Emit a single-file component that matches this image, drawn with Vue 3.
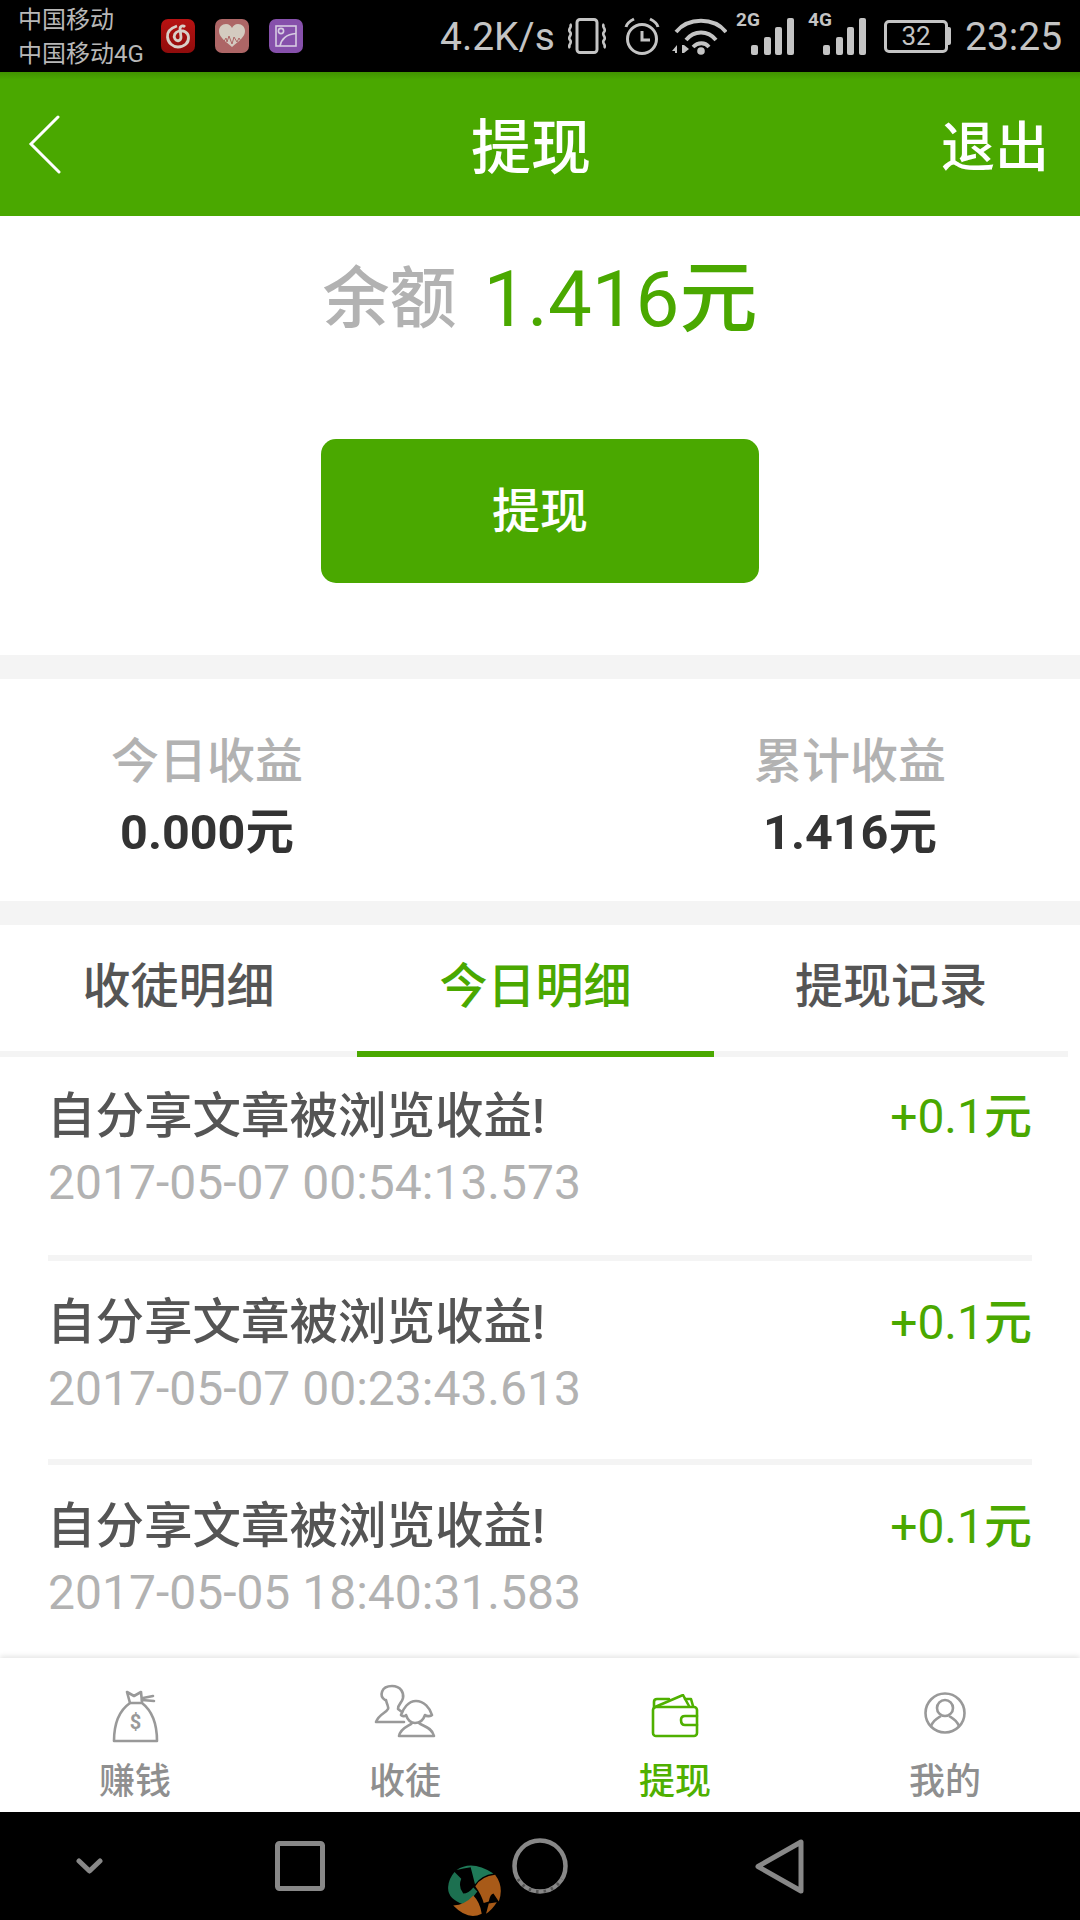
<script setup>
const rows = [
  { time: '2017-05-07 00:54:13.573' },
  { time: '2017-05-07 00:23:43.613' },
  { time: '2017-05-05 18:40:31.583' },
]
</script>

<template>
  <div class="page">
    <div class="status">
      <div class="carriers"><div>中国移动</div><div>中国移动4G</div></div>
      <div class="apps">
        <span class="app red">
          <svg width="26" height="26" viewBox="0 0 26 26" fill="none" stroke="#d8cfc8" stroke-width="2.8">
            <path d="M12 3 C6 5 2 9 2.5 14 C3 20 8 24 13 24 C19 24 24 20 23.5 14 C23 9 18 7 14 8 C10 9 8 13 10 16 C12 19 16 18 16 14 L15 6 C15 3 18 2 20 4"/>
          </svg>
        </span>
        <span class="app rose">
          <svg width="26" height="24" viewBox="0 0 26 24">
            <path d="M13 23 C6 17 0 13 0 7 C0 3 3 0 7 0 C10 0 12 2 13 4 C14 2 16 0 19 0 C23 0 26 3 26 7 C26 13 20 17 13 23 Z" fill="#d4cbc0"/>
            <path d="M4 19 L7 14 L8 18 L10 12 L13 20 L15 13 L18 18 L20 14 L23 19" fill="none" stroke="#ad6666" stroke-width="1"/>
          </svg>
        </span>
        <span class="app purple">
          <svg width="24" height="24" viewBox="0 0 24 24" fill="none" stroke="#d6cbe2" stroke-width="1.6">
            <rect x="2" y="2" width="20" height="20"/>
            <circle cx="7" cy="7" r="2.6"/>
            <path d="M6 22 C7 16 12 10 22 9.5"/>
          </svg>
        </span>
      </div>
      <div class="speed">4.2K/s</div>
      <svg class="si vib" width="40" height="36" viewBox="0 0 40 36" fill="none" stroke="#c4c4c4" stroke-width="3">
        <rect x="10" y="1.5" width="20" height="33" rx="3"/>
        <path d="M3 6 C6 9 0 11 3 14 C6 17 0 19 3 22 C6 25 0 27 3 30 M37 6 C34 9 40 11 37 14 C34 17 40 19 37 22 C34 25 40 27 37 30" stroke-width="2.6"/>
      </svg>
      <svg class="si alarm" width="36" height="38" viewBox="0 0 36 38" fill="none" stroke="#c4c4c4" stroke-width="3">
        <circle cx="18" cy="22" r="14.5"/>
        <path d="M18 14 V23 H26"/>
        <path d="M2 10 C3 6 6 4 10 2 M34 10 C33 6 30 4 26 2"/>
      </svg>
      <svg class="si wifi" width="55" height="38" viewBox="0 0 55 38" fill="none" stroke="#c4c4c4" stroke-width="3.8">
        <path d="M4 15 C16 0 42 0 54 15"/>
        <path d="M14 23 C22 13 36 13 44 23"/>
        <path d="M21 30 C26 25 33 25 37 30"/>
        <circle cx="29" cy="34" r="3.8" fill="#c4c4c4" stroke="none"/>
        <path d="M0 34 L5 28 V36 H3 V34 Z M10 28 H12 L17 32 L12 36 H10 Z" fill="#c4c4c4" stroke="none"/>
      </svg>
      <div class="sig g2"><span class="gl">2G</span><i class="b1"></i><i class="b2"></i><i class="b3"></i><i class="b4"></i></div>
      <div class="sig g4"><span class="gl">4G</span><i class="b1"></i><i class="b2"></i><i class="b3"></i><i class="b4"></i></div>
      <div class="battery"><div class="bbody">32</div><div class="bcap"></div></div>
      <div class="clock">23:25</div>
    </div>

    <div class="header">
      <svg class="back" width="33" height="59" viewBox="0 0 33 59" fill="none" stroke="#fff" stroke-width="3" stroke-linecap="round">
        <path d="M30 2 L3 29 L31 57"/>
      </svg>
      <div class="title">提现</div>
      <div class="logout">退出</div>
    </div>

    <div class="balance">
      <div class="amount-line">
        <span class="bal-label">余额</span>
        <span class="bal-value">1.416<span class="yuan">元</span></span>
      </div>
      <div class="cash-btn"><span class="cash-text">提现</span></div>
    </div>

    <div class="stats">
      <div class="stat">
        <div class="stat-label">今日收益</div>
        <div class="stat-value">0.000元</div>
      </div>
      <div class="stat">
        <div class="stat-label">累计收益</div>
        <div class="stat-value">1.416元</div>
      </div>
    </div>

    <div class="tabs">
      <div class="tab">收徒明细</div>
      <div class="tab on">今日明细</div>
      <div class="tab last">提现记录</div>
    </div>

    <div class="list">
      <div v-for="r in rows" :key="r.time" class="row">
        <div class="row-main">
          <div class="row-title">自分享文章被浏览收益!</div>
          <div class="row-time">{{ r.time }}</div>
        </div>
        <div class="row-amt">+0.1<span class="cjk">元</span></div>
      </div>
    </div>

    <div class="tabbar">
      <div class="nav-item">
        <div class="ic">
          <svg class="i-bag" width="47" height="53" viewBox="0 0 47 53" fill="none" stroke="#999" stroke-width="2.6" stroke-linejoin="round" stroke-linecap="round">
            <path d="M2 51 C2 33 8 20 18 13 L30 13 C39 20 45 33 45 51 Z"/>
            <path d="M18 13 L15 2 L22 6 L29 2 L30 12"/>
            <path d="M30 10 L42 11 M31 8 L41 6"/>
            <text x="23.5" y="39" text-anchor="middle" class="dollar" stroke="none" fill="#999">$</text>
          </svg>
        </div>
        <div class="nav-label">赚钱</div>
      </div>
      <div class="nav-item">
        <div class="ic">
          <svg class="i-ppl" width="62" height="54" viewBox="0 0 62 54" fill="none" stroke="#999" stroke-width="2.6" stroke-linejoin="round" stroke-linecap="round">
            <path d="M11 16 C5 12 7 2 18 2 C27 2 30 9 29 14 C28 19 24 20 24 25 L28 28 M12 16 C13 21 15 23 14 25 C12 29 5 30 2 38 H30"/>
            <path d="M42 17 C34 17 29 25 27 31 C28 32 31 33 32 31 C34 37 38 39 41 39 C45 39 49 37 51 31 C53 33 57 32 58 31 C56 24 50 17 42 17 Z"/>
            <path d="M38 39 C36 42 27 43 25 52 H60 C58 43 48 42 45 39" />
          </svg>
        </div>
        <div class="nav-label">收徒</div>
      </div>
      <div class="nav-item on">
        <div class="ic">
          <svg class="i-wal" width="48" height="44" viewBox="0 0 48 44" fill="none" stroke="#4fb000" stroke-width="2.6" stroke-linejoin="round" stroke-linecap="round">
            <rect x="2" y="13" width="44" height="29" rx="3"/>
            <path d="M3 14 V8 Q3 5 6 5 H18"/>
            <path d="M4 13 L32 1 L38 12"/>
            <path d="M34 5 H40 L42 12"/>
            <path d="M46 22 H34 Q30 22 30 26 Q30 31 34 31 H46"/>
          </svg>
        </div>
        <div class="nav-label">提现</div>
      </div>
      <div class="nav-item">
        <div class="ic">
          <svg class="i-me" width="42" height="42" viewBox="0 0 42 42" fill="none" stroke="#999" stroke-width="2.6">
            <circle cx="21" cy="21" r="19.5"/>
            <circle cx="21" cy="16" r="8"/>
            <path d="M7 34 C10 27 14 26 17 24 M35 34 C32 27 28 26 25 24"/>
          </svg>
        </div>
        <div class="nav-label">我的</div>
      </div>
    </div>

    <div class="sysnav">
      <svg class="n-chev" width="27" height="16" viewBox="0 0 27 16" fill="none" stroke="#888" stroke-width="5" stroke-linecap="round" stroke-linejoin="round">
        <path d="M3 3 L13.5 13 L24 3"/>
      </svg>
      <svg class="n-sq" width="50" height="50" viewBox="0 0 50 50" fill="none" stroke="#888" stroke-width="5">
        <rect x="2.5" y="2.5" width="45" height="45" rx="2"/>
      </svg>
      <svg class="n-circle" width="56" height="56" viewBox="0 0 56 56" fill="none" stroke="#888" stroke-width="4.5">
        <circle cx="28" cy="28" r="25.5"/>
        <path d="M6 41 A25.5 25.5 0 0 0 50 41" stroke="#555" stroke-dasharray="2.5 5" stroke-width="3"/>
      </svg>
      <svg class="n-tri" width="49" height="55" viewBox="0 0 49 55" fill="none" stroke="#888" stroke-width="5" stroke-linejoin="round">
        <path d="M3 27.5 L46 3 V52 Z"/>
      </svg>
      <svg class="logo" width="53" height="53" viewBox="25 102 157 158">
        <path d="M50 120 Q95 88 160 130 Q125 135 105 162 Q98 135 92 112 Q70 116 50 120 Z" fill="#1f7a58"/>
        <path d="M44 126 L64 146 Q54 170 70 190 Q86 190 100 172 L112 184 Q90 215 70 222 Q22 205 25 170 Q27 145 44 126 Z" fill="#1c7050"/>
        <path d="M106 168 Q125 138 165 134 Q192 170 176 214 L160 190 Q150 192 146 214 L131 218 Q125 195 106 168 Z" fill="#a85a18"/>
        <path d="M40 226 Q75 224 100 196 Q120 216 125 250 Q85 272 40 226 Z" fill="#b0601c"/>
        <path d="M146 220 L170 216 Q155 240 138 250 Z" fill="#a85a18"/>
      </svg>
    </div>
  </div>
</template>

<style scoped>
.page {
  width: 1080px;
  height: 1920px;
  display: flex;
  flex-direction: column;
  background: #fff;
  overflow: hidden;
  font-family: Roboto, "Noto Sans CJK SC", sans-serif;
  color: #555;
}
.status {
  height: 72px;
  background: #000;
  display: flex;
  align-items: center;
  position: relative;
  color: #c4c4c4;
  flex: none;
}
.carriers {
  width: 143px;
  padding-left: 18px;
  font-size: 24px;
  line-height: 34px;
  color: #b8b8b8;
  margin-top: 1px;
}
.apps {
  display: flex;
  gap: 20px;
  width: 281px;
}
.app {
  width: 34px;
  height: 34px;
  border-radius: 7px;
  display: flex;
  align-items: center;
  justify-content: center;
}
.red { background: linear-gradient(#b71212, #8f0c0c); }
.rose { background: #ad6666; }
.purple { background: #8650ab; }
.speed {
  font-size: 39px;
  width: 127px;
  margin-left: -2px;
  margin-top: 2px;
  white-space: nowrap;
}
.si { flex: none; }
.vib { margin-right: 17px; margin-top: 0; }
.alarm { margin-right: 12px; }
.wifi { margin-right: 9px; }
.sig {
  position: relative;
  width: 58px;
  height: 43px;
  margin-right: 14px;
  flex: none;
  margin-top: -6px;
}
.g4 { margin-right: 18px; }
.gl {
  position: absolute;
  left: 0;
  top: -2px;
  font-size: 19px;
  font-weight: 700;
  line-height: 20px;
}
.sig i {
  position: absolute;
  bottom: 0;
  width: 7px;
  background: #c4c4c4;
  border-radius: 2px;
}
.sig .b1 { left: 15px; height: 10px; }
.sig .b2 { left: 28px; height: 18px; }
.sig .b3 { left: 39px; height: 28px; }
.sig .b4 { left: 51px; height: 37px; }
.battery { display: flex; align-items: center; margin-right: 14px; flex: none; }
.bbody {
  width: 64px;
  height: 33px;
  box-sizing: border-box;
  border: 3px solid #c4c4c4;
  border-radius: 5px;
  font-size: 26px;
  line-height: 27px;
  text-align: center;
}
.bcap { width: 3px; height: 18px; background: #c4c4c4; border-radius: 0 2px 2px 0; }
.clock { font-size: 39px; margin-top: 2px; white-space: nowrap; }

.header {
  height: 144px;
  background: linear-gradient(#419300 0, #4aa800 8px, #4aa800 100%);
  display: flex;
  align-items: center;
  position: relative;
  color: #fff;
  flex: none;
}
.back { margin-left: 28px; margin-top: 1px; }
.title {
  position: absolute;
  left: 0;
  width: 1062px;
  text-align: center;
  font-size: 60px;
  font-weight: 500;
  margin-top: -4px;
}
.logout {
  margin-left: auto;
  margin-right: 31px;
  font-size: 54px;
  font-weight: 500;
  margin-top: -2px;
}

.balance {
  height: 439px;
  padding-top: 25px;
  box-sizing: border-box;
  display: flex;
  flex-direction: column;
  align-items: center;
  flex: none;
}
.amount-line {
  height: 102px;
  display: flex;
  align-items: center;
  justify-content: center;
  white-space: nowrap;
}
.bal-label { font-size: 67px; font-weight: 500; color: #b2b2b2; margin-right: 27px; }
.bal-value { font-size: 78px; color: #4aa800; }
.yuan { font-weight: 500; }
.cash-btn {
  margin-top: 96px;
  width: 438px;
  height: 144px;
  background: #4aa800;
  border-radius: 15px;
  color: #fff;
  font-size: 48px;
  font-weight: 500;
  display: flex;
  align-items: center;
  justify-content: center;
}
.cash-text { margin-bottom: 9px; }

.stats {
  border-top: 24px solid #f4f4f4;
  border-bottom: 24px solid #f4f4f4;
  padding: 48px 134px 0 111px;
  display: flex;
  justify-content: space-between;
  flex: none;
  height: 174px;
}
.stat { text-align: center; width: 192px; }
.stat-label { font-size: 48px; font-weight: 500; line-height: 70px; color: #b2b2b2; }
.stat-value { font-size: 48.5px; line-height: 72px; font-weight: 700; color: #333; white-space: nowrap; }

.tabs {
  height: 132px;
  width: 1068px;
  box-sizing: border-box;
  display: flex;
  border-bottom: 6px solid #f4f4f4;
  flex: none;
}
.tab {
  width: 357px;
  flex: none;
  height: 132px;
  box-sizing: border-box;
  font-size: 48px;
  font-weight: 500;
  line-height: 123px;
  text-align: center;
  color: #555;
}
.tab.last { width: 354px; }
.tab.on {
  color: #4aa800;
  border-bottom: 6px solid #4aa800;
}

.list {
  flex: 1;
  overflow: hidden;
  min-height: 0;
}
.row {
  height: 204px;
  margin: 0 48px;
  box-sizing: border-box;
  border-bottom: 6px solid #f4f4f4;
  display: flex;
  justify-content: space-between;
  padding-top: 29px;
}
.row:first-child { padding-top: 27px; }
.row:last-child { border-bottom: 0; }
.row-title { font-size: 48.5px; font-weight: 500; line-height: 66px; color: #555; margin-left: -1px; }
.row-time { font-size: 48px; line-height: 66px; color: #b2b2b2; }
.row-amt { font-size: 48px; line-height: 66px; color: #4aa800; white-space: nowrap; }
.cjk { font-weight: 500; }

.tabbar {
  height: 154px;
  display: flex;
  position: relative;
  box-shadow: 0 -2px 5px rgba(0, 0, 0, 0.1);
  background: #fff;
  flex: none;
}
.nav-item {
  flex: 1;
  display: flex;
  flex-direction: column;
  align-items: center;
  color: #8f8f8f;
}
.nav-item.on { color: #4fb000; }
.ic {
  height: 99px;
  display: flex;
  align-items: flex-start;
  justify-content: center;
}
.i-bag { margin-top: 32px; }
.i-ppl { margin-top: 26px; }
.i-wal { margin-top: 36px; }
.i-me { margin-top: 34px; }
.nav-label { font-size: 36px; font-weight: 500; line-height: 50px; }
.dollar { font-family: Roboto, sans-serif; font-size: 20px; font-weight: 700; }

.sysnav {
  height: 108px;
  background: #000;
  display: flex;
  align-items: center;
  position: relative;
  flex: none;
}
.n-chev { margin-left: 76px; margin-right: 172px; }
.n-sq { margin-right: 187px; }
.n-circle { margin-right: 187px; }
.logo { position: absolute; left: 448px; top: 52px; }
</style>

<style>
html, body { margin: 0; padding: 0; background: #fff; }
</style>
